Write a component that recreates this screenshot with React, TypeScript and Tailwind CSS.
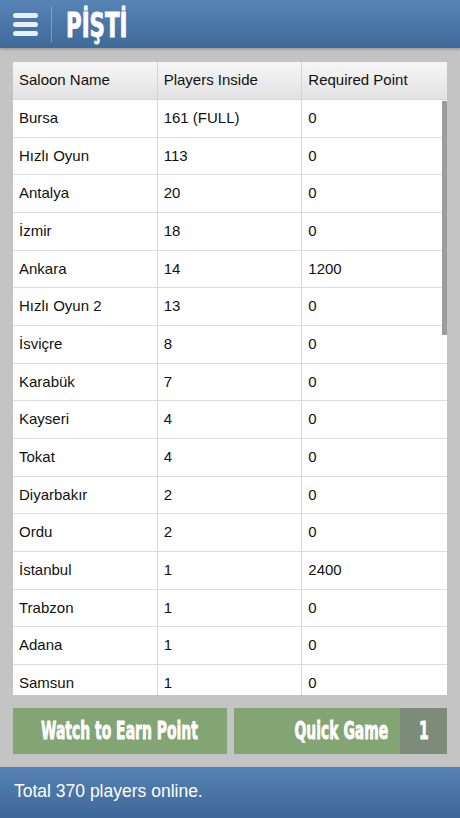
const rows: [string, string, string][] = [
  ["Bursa", "161 (FULL)", "0"],
  ["Hızlı Oyun", "113", "0"],
  ["Antalya", "20", "0"],
  ["İzmir", "18", "0"],
  ["Ankara", "14", "1200"],
  ["Hızlı Oyun 2", "13", "0"],
  ["İsviçre", "8", "0"],
  ["Karabük", "7", "0"],
  ["Kayseri", "4", "0"],
  ["Tokat", "4", "0"],
  ["Diyarbakır", "2", "0"],
  ["Ordu", "2", "0"],
  ["İstanbul", "1", "2400"],
  ["Trabzon", "1", "0"],
  ["Adana", "1", "0"],
  ["Samsun", "1", "0"],
  ["Sakarya", "1", "0"],
];

const heavy =
  "font-['DejaVu_Sans_Condensed','Liberation_Sans_Narrow',sans-serif] font-bold [-webkit-text-stroke:0.8px_white]";

export default function App() {
  return (
    <div className="w-[460px] h-[818px] bg-[#c4c4c4] flex flex-col font-['Liberation_Sans',Arial,sans-serif] overflow-hidden">
      <header className="h-[48px] shrink-0 bg-gradient-to-b from-[#5784b5] to-[#3f6a9a] flex items-center shadow-[0_1px_3px_rgba(0,0,0,0.3)]">
        <div className="w-[25px] ml-[13px] flex flex-col gap-[4px]">
          <span className="h-[5px] rounded-full bg-[#e9eef4]" />
          <span className="h-[5px] rounded-full bg-[#e9eef4]" />
          <span className="h-[5px] rounded-full bg-[#e9eef4]" />
        </div>
        <div className="ml-[13px] w-px h-[36px] bg-[#7c9cc2]" />
        <h1 className={`${heavy} ml-[14px] mt-[2px] text-white text-[33px] leading-none [transform:scaleX(0.72)] origin-left`}>
          PİŞTİ
        </h1>
      </header>

      <main className="flex-1 flex flex-col px-[13px] pt-[14px]">
        <div className="h-[633px] bg-white overflow-hidden relative text-[15px] text-[#111]">
          <div className="grid grid-cols-3 h-[38px] bg-gradient-to-b from-[#f6f6f6] to-[#e2e2e2] border-b border-[#d6d6d6]">
            <div className="flex items-center px-[6px] border-r border-[#d4d4d4]">Saloon Name</div>
            <div className="flex items-center px-[6px] border-r border-[#d4d4d4]">Players Inside</div>
            <div className="flex items-center px-[6px]">Required Point</div>
          </div>
          {rows.map(([name, players, point]) => (
            <div key={name} className="grid grid-cols-3 h-[37.67px] border-b border-[#dcdcdc]">
              <div className="flex items-center px-[6px] border-r border-[#d8d8d8]">{name}</div>
              <div className="flex items-center px-[6px] border-r border-[#d8d8d8]">{players}</div>
              <div className="flex items-center px-[6px]">{point}</div>
            </div>
          ))}
          <div className="absolute right-0 top-[39px] w-[5px] h-[234px] bg-[#9c9c9c]" />
        </div>

        <div className="mt-[13px] h-[46px] flex gap-[7px]">
          <div className={`${heavy} flex-1 min-w-0 bg-[#83a574] text-white text-[25px] flex items-center justify-center`}>
            <div className="whitespace-nowrap [transform:scaleX(0.62)]">Watch to Earn Point</div>
          </div>
          <div className={`${heavy} flex-1 min-w-0 bg-[#83a574] text-white text-[25px] flex items-stretch`}>
            <div className="flex-1 flex items-center justify-end pr-[12px]">
              <div className="whitespace-nowrap [transform:scaleX(0.62)] origin-right">Quick Game</div>
            </div>
            <div className="w-[47px] bg-[#7d8b79] flex items-center justify-center">
              <div className="[transform:scaleX(0.62)]">1</div>
            </div>
          </div>
        </div>
      </main>

      <footer className="h-[51px] shrink-0 mt-[13px] bg-gradient-to-b from-[#5682b3] to-[#3e6898] flex items-center px-[14px] pb-[2px] text-white text-[17.5px]">
        Total 370 players online.
      </footer>
    </div>
  );
}
